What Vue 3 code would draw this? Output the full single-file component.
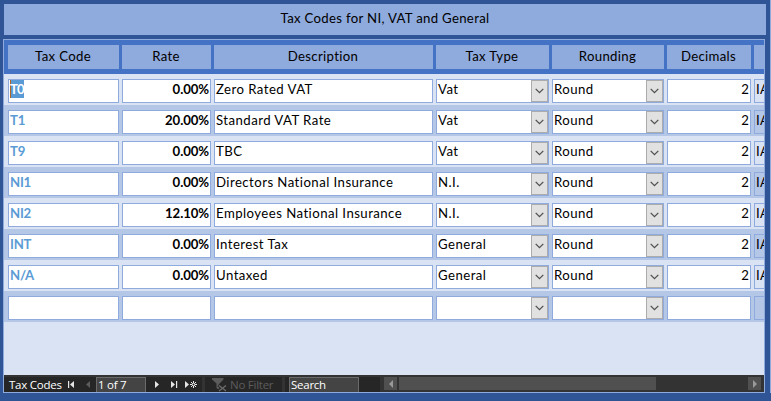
<script setup>
const columns = ['Tax Code', 'Rate', 'Description', 'Tax Type', 'Rounding', 'Decimals', '']
const rows = [
  ['T0', '0.00%', 'Zero Rated VAT', 'Vat', 'Round', '2', 'IA'],
  ['T1', '20.00%', 'Standard VAT Rate', 'Vat', 'Round', '2', 'IA'],
  ['T9', '0.00%', 'TBC', 'Vat', 'Round', '2', 'IA'],
  ['NI1', '0.00%', 'Directors National Insurance', 'N.I.', 'Round', '2', 'IA'],
  ['NI2', '12.10%', 'Employees National Insurance', 'N.I.', 'Round', '2', 'IA'],
  ['INT', '0.00%', 'Interest Tax', 'General', 'Round', '2', 'IA'],
  ['N/A', '0.00%', 'Untaxed', 'General', 'Round', '2', 'IA'],
  ['', '', '', '', '', '', ''],
]
const kinds = ['code', 'rate', 'desc', 'combo', 'combo', 'decimals', 'extra']
</script>

<template>
  <div class="form">
    <header class="title"><span>Tax Codes for NI, VAT and General</span></header>
    <section class="subform">
      <div class="grid head">
        <div v-for="(c, i) in columns" :key="i" class="hcell">{{ c }}</div>
      </div>
      <div v-for="(row, r) in rows" :key="r" class="grid row">
        <div v-for="(value, i) in row" :key="i" class="cell" :class="kinds[i]">
          <span class="value" :class="{ selected: r === 0 && i === 0 }">{{ value }}</span>
          <span v-if="kinds[i] === 'combo'" class="drop">
            <svg width="9" height="6" viewBox="0 0 9 6"><path d="M0.7 0.9 4.5 4.7 8.3 0.9" fill="none" stroke="#505050" stroke-width="1.3" /></svg>
          </span>
        </div>
      </div>
      <div class="blank"></div>
      <footer class="nav">
        <div class="records">
          <span class="label">Tax Codes</span>
          <svg class="first" width="24" height="15" viewBox="0 0 24 15">
            <path d="M0 4h1.2v7H0zM6 4v7L2 7.5z" fill="#e6e6e6" />
            <path d="M22 4v7L18 7.5z" fill="#5c5c5c" />
          </svg>
          <span class="box page">1 of 7</span>
          <svg class="next" width="44" height="15" viewBox="0 0 44 15">
            <path d="M1 4v7l4-3.5zM17 4v7l4-3.5zM22 4h1.2v7H22zM31 4v7l4-3.5z" fill="#e6e6e6" />
            <path d="M39.5 4v7M36 7.5h7M37 5l5 5M42 5l-5 5" stroke="#e6e6e6" stroke-width="1" />
            <circle cx="39.5" cy="7.5" r="1" fill="#262626" />
          </svg>
        </div>
        <div class="filter">
          <svg width="15" height="15" viewBox="0 0 15 15">
            <path d="M0 1h11.5v1.5L7.5 6.5v7L4.5 11V6.5L0 2.5z" fill="#5c5c5c" />
            <path d="M6.5 8l7.5 6M14 8l-7.5 6" stroke="#262626" stroke-width="3" />
            <path d="M7 8.5l7 5.5M14 8.5l-7 5.5" stroke="#6a6a6a" stroke-width="1.4" />
          </svg>
          <span>No Filter</span>
        </div>
        <div class="search"><span class="box">Search</span></div>
        <div class="scroll">
          <span class="arrow"><svg width="4" height="8" viewBox="0 0 4 8"><path d="M4 0v8L0 4z" fill="#999" /></svg></span>
          <span class="thumb"></span>
          <span class="arrow end"><svg width="4" height="8" viewBox="0 0 4 8"><path d="M0 0v8l4-4z" fill="#999" /></svg></span>
        </div>
      </footer>
    </section>
  </div>
</template>

<style>
body { margin: 0; overflow: hidden; }
</style>

<style scoped>
* { box-sizing: border-box; }
.form {
  width: 771px; height: 401px; padding: 4px 6px 0 3px;
  background: linear-gradient(#8faadc, #8faadc) right top / 1px 393px no-repeat #2f5597;
  font: 13.2px/18px Lato, sans-serif; color: #000; white-space: nowrap;
}
.title {
  height: 31px; margin: 0 -1px 4px 1px; padding-top: 5px; background: #8faadc;
  text-align: center; letter-spacing: 0.31px;
}
.subform {
  width: 762px; height: 354px; border: 1px solid #8faadc; background: #dae3f3;
  overflow: hidden; display: flex; flex-direction: column;
}
.grid {
  display: grid; grid-template-columns: 111px 89px 219px 113px 112px 84px 60px;
  column-gap: 3px; padding-left: 4px; flex: none;
}
.head { height: 34px; padding-top: 5px; background: #4472c4; }
.hcell {
  height: 24px; padding-right: 1px; background: #8faadc; text-align: center;
  line-height: 22px; letter-spacing: 0.33px;
}
.row { height: 31px; padding-top: 5px; }
.row:nth-child(odd) { background: #b4c7e7; }
.cell {
  height: 24px; border: 1px solid #8faadc; background: #fff; display: flex;
  padding: 0 1px; overflow: hidden;
}
.value { height: 18px; line-height: 19px; }
.desc, .combo { letter-spacing: 0.45px; }
.code { color: #5b9bd5; font-weight: 700; letter-spacing: -0.25px; }
.rate { justify-content: flex-end; font-weight: 700; letter-spacing: -0.1px; }
.decimals { justify-content: flex-end; }
.combo { justify-content: space-between; padding-right: 0; }
.extra { background: transparent; letter-spacing: 0.3px; }
.selected { background: #5b9bd5; color: #fff; box-shadow: inset 1px 0 #b4641e; letter-spacing: -0.9px; }
.drop {
  width: 17px; height: 22px; border: 1px solid #acacac; background: #e1e1e1;
  display: flex; align-items: center; justify-content: center;
}
.blank { flex: 1; }
.nav {
  height: 17px; flex: none; display: flex; padding-top: 2px; background: #333;
  font: 11.5px/15px "Open Sans", sans-serif; letter-spacing: -0.25px; color: #fff;
}
.records { width: 198px; display: flex; background: #262626; padding-left: 5px; }
.label { width: 59px; }
.page { width: 50px; margin-left: 4px; }
.next { margin-left: 8px; }
.box { height: 15px; border: 1px solid #6a6a6a; border-bottom: 0; background: #444; padding-left: 1px; line-height: 14px; }
.filter { width: 77px; margin-left: 3px; padding-left: 7px; background: #262626; color: #5c5c5c; display: flex; gap: 3px; }
.search { width: 95px; margin-left: 3px; padding-left: 4px; background: #262626; }
.search .box { display: block; width: 70px; }
.scroll { flex: 1; display: flex; padding: 0 3px 0 4px; height: 13px; }
.arrow { width: 13px; height: 13px; background: #505050; display: flex; align-items: center; justify-content: center; }
.thumb { width: 257px; margin-left: 2px; background: #505050; }
.end { margin-left: auto; }
</style>
